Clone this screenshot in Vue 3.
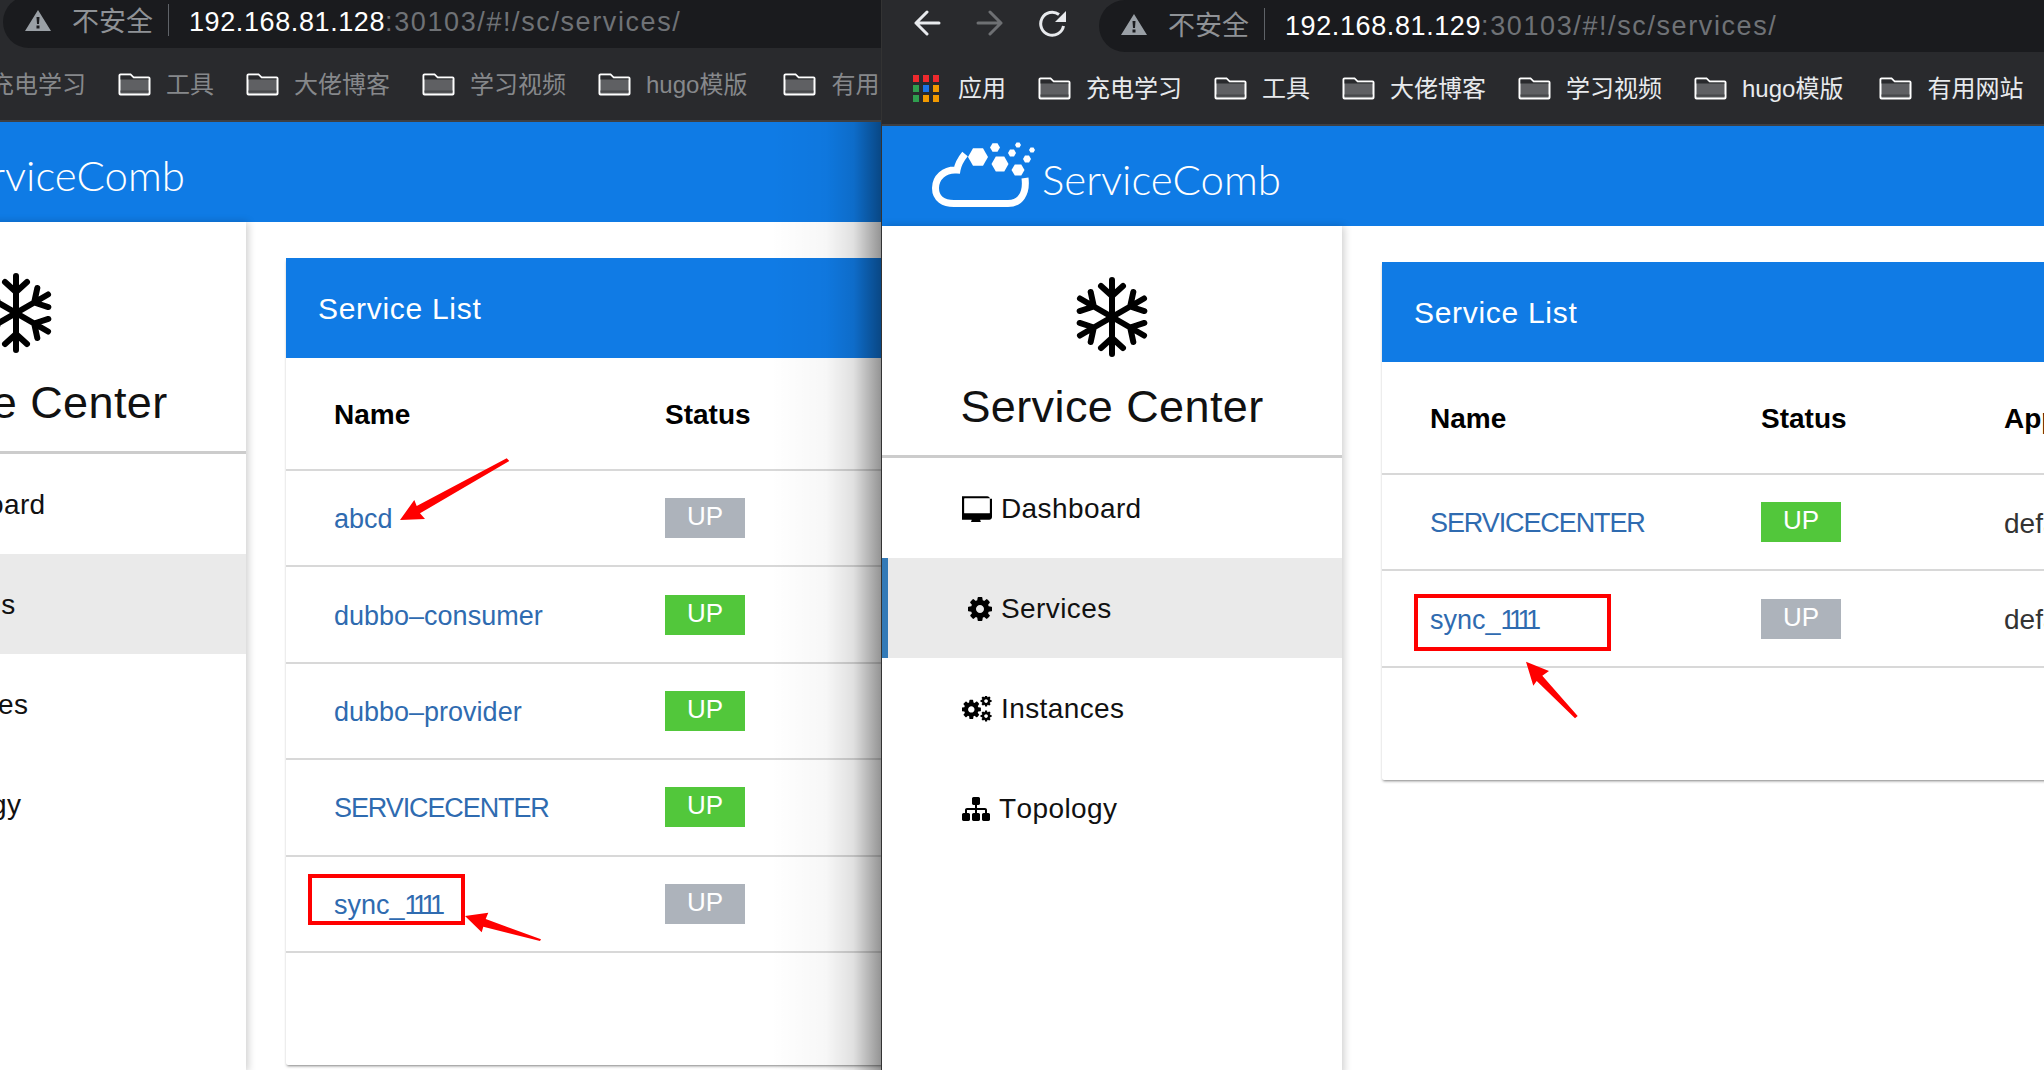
<script setup>
const cogPath = 'M1152 896q0-106-75-181t-181-75-181 75-75 181 75 181 181 75 181-75 75-181zm512-109v222q0 12-8 23t-20 13l-185 28q-19 54-39 91 35 50 107 138 10 12 10 25t-9 23q-27 37-99 108t-94 71q-12 0-26-9l-138-108q-44 23-91 38-16 136-29 186-7 28-36 28h-222q-14 0-24.5-8.5t-11.5-21.5l-28-184q-49-16-90-37l-141 107q-10 9-25 9-14 0-25-11-126-114-165-168-7-10-7-23 0-12 8-23 15-21 51-66.5t54-70.5q-27-50-41-99l-183-27q-13-2-21-12.5t-8-23.5v-222q0-12 8-23t19-13l186-28q14-46 39-92-40-57-107-138-10-12-10-24 0-10 9-23 26-36 98.5-107.5t94.5-71.5q13 0 26 10l138 107q44-23 91-38 16-136 29-186 7-28 36-28h222q14 0 24.5 8.5t11.5 21.5l28 184q49 16 90 37l142-107q9-9 24-9 13 0 25 10 129 119 165 170 7 8 7 22 0 12-8 23-15 21-51 66.5t-54 70.5q26 50 41 98l183 28q13 2 21 12.5t8 23.5z'
const desktopPath = 'M1664 992v-832q0-13-9.5-22.5t-22.5-9.5h-1472q-13 0-22.5 9.5t-9.5 22.5v832q0 13 9.5 22.5t22.5 9.5h1472q13 0 22.5-9.5t9.5-22.5zm128-832v1088q0 66-47 113t-113 47h-544q0 37 16 77.5t32 71 16 43.5q0 26-19 45t-45 19h-512q-26 0-45-19t-19-45q0-14 16-44t32-70 16-78h-544q-66 0-113-47t-47-113v-1088q0-66 47-113t113-47h1472q66 0 113 47t47 113z'
const sitemapPath = 'M1792 1248v320q0 40-28 68t-68 28h-320q-40 0-68-28t-28-68v-320q0-40 28-68t68-28h96v-192h-512v192h96q40 0 68 28t28 68v320q0 40-28 68t-68 28h-320q-40 0-68-28t-28-68v-320q0-40 28-68t68-28h96v-192h-512v192h96q40 0 68 28t28 68v320q0 40-28 68t-68 28h-320q-40 0-68-28t-28-68v-320q0-40 28-68t68-28h96v-192q0-52 38-90t90-38h512v-192h-96q-40 0-68-28t-28-68v-320q0-40 28-68t68-28h320q40 0 68 28t28 68v320q0 40-28 68t-68 28h-96v192h512q52 0 90 38t38 90v192h96q40 0 68 28t28 68z'

const bookmarks = ['充电学习', '工具', '大佬博客', '学习视频', 'hugo模版', '有用网站']
const appColors = ['#ee2a2e', '#ee2a2e', '#ee2a2e', '#2f9e4f', '#1a73e8', '#f29900', '#2f9e4f', '#f29900', '#f29900']
const menu = [
  { name: 'Dashboard', icon: 'desktop' },
  { name: 'Services', icon: 'cog', active: true },
  { name: 'Instances', icon: 'cogs' },
  { name: 'Topology', icon: 'sitemap' }
]

// logo 上的小六边形
const hexes = [[46, 12, 10], [68, 19, 8.5], [63, 2.5, 5], [80, 8, 4], [86, 25, 6.5], [86, 0, 3], [95, 14, 4], [100, 5, 3]].map(([x, y, r]) =>
  [0, 1, 2, 3, 4, 5].map((i) => {
    const a = (Math.PI / 3) * i
    return `${(x + r * Math.cos(a)).toFixed(1)},${(y + 3 + r * Math.sin(a)).toFixed(1)}`
  }).join(' ')
)

// 两个浏览器窗口，内容相同，左边的被遮住一部分
const panes = [
  {
    key: 'left',
    ip: '192.168.81.128',
    rows: [
      { name: 'abcd', online: false },
      { name: 'dubbo–consumer', online: true },
      { name: 'dubbo–provider', online: true },
      { name: 'SERVICECENTER', online: true, caps: true },
      { name: 'sync_', tail: '1111', online: false }
    ]
  },
  {
    key: 'right',
    ip: '192.168.81.129',
    rows: [
      { name: 'SERVICECENTER', online: true, caps: true },
      { name: 'sync_', tail: '1111', online: false }
    ]
  }
]
</script>

<template>
  <div class="page">
    <div v-for="pane in panes" :key="pane.key" class="pane" :class="'pane-' + pane.key">
      <div class="window">
        <header class="toolbar">
          <div class="top-row">
            <div class="nav">
              <svg width="28" height="26" viewBox="0 0 28 26" fill="none" stroke="#e8eaed" stroke-width="3" stroke-linecap="round" stroke-linejoin="round"><path d="M26 13H3M14 2 3 13 14 24" /></svg>
              <svg width="28" height="26" viewBox="0 0 28 26" fill="none" stroke="#6e7073" stroke-width="3" stroke-linecap="round" stroke-linejoin="round"><path d="M2 13h23M14 2l11 11-11 11" /></svg>
              <svg width="27" height="27" viewBox="0 0 27 27" fill="none" stroke="#e8eaed" stroke-width="3"><path d="M20 4.500A11.500 11.500 0 1 0 24.500 16" /><path d="M27 1v11H16z" fill="#e8eaed" stroke="none" /></svg>
            </div>
            <div class="address">
              <svg class="warn" width="26" height="21" viewBox="0 0 26 21"><path fill="#9aa0a6" fill-rule="evenodd" d="M13 0 26 21H0zM11.500 7l.5 7h2l.5-7zM11.500 15.500v3h3v-3z" /></svg>
              <span class="unsafe">不安全</span>
              <span class="sep"></span>
              <span class="host">{{ pane.ip }}</span><span class="path">:30103/#!/sc/services/</span>
            </div>
          </div>
          <div class="bookmarks">
            <div class="apps">
              <svg width="26" height="27" viewBox="0 0 26 27"><rect v-for="(c, i) in appColors" :key="i" :x="(i % 3) * 10" :y="Math.floor(i / 3) * 10" width="6" height="7" :fill="c" /></svg>
              <span class="mark">应用</span>
            </div>
            <div v-for="b in bookmarks" :key="b" class="bookmark">
              <svg class="folder" width="33" height="23" viewBox="0 0 33 23">
                <path d="M1.500 2.500a1 1 0 0 1 1-1h10l3 3h15a1 1 0 0 1 1 1v15a1 1 0 0 1-1 1h-28a1 1 0 0 1-1-1z" fill="#5f6063" stroke="#fff" stroke-width="2" />
                <path d="M2.500 17.500h28v2h-28z" fill="#47484b" />
                <path d="M2.500 2.500h10l3 3h15v1h-28z" fill="#292a2d" />
              </svg>
              <span class="mark">{{ b }}</span>
            </div>
          </div>
        </header>

        <div class="brandbar">
          <svg class="logo" width="104" height="68" viewBox="0 0 104 68">
            <path d="M33 12C29 17 26 22 25 28 12 27 3.500 36 3.500 46 3.500 57 12 61.500 22 61.500H76C88 61.500 95 52 93 36" fill="none" stroke="#fff" stroke-width="7" />
            <polygon v-for="(pts, i) in hexes" :key="i" :points="pts" fill="#fff" />
          </svg>
          <span class="brand">ServiceComb</span>
        </div>

        <div class="body">
          <aside class="sidebar">
            <div class="sidebar-head">
              <svg width="72" height="82" viewBox="-36 -41 72 82" fill="none" stroke="#000" stroke-width="6" stroke-linecap="round">
                <g v-for="deg in [0, 60, 120]" :key="deg" :transform="`rotate(${deg})`">
                  <path d="M0-37V37M0-21-11-31M0-21 11-31M0 21-11 31M0 21 11 31" />
                </g>
              </svg>
              <div class="title">Service Center</div>
            </div>
            <nav>
              <div v-for="item in menu" :key="item.name" class="menu-item" :class="{ active: item.active }">
                <svg v-if="item.icon === 'desktop'" width="30" height="26" viewBox="0 0 1792 1536"><path :d="desktopPath" /></svg>
                <svg v-else-if="item.icon === 'cog'" class="cog" width="24" height="24" viewBox="128 128 1536 1536"><path :d="cogPath" fill-rule="evenodd" /></svg>
                <svg v-else-if="item.icon === 'cogs'" width="30" height="26" viewBox="0 0 30 26">
                  <path :d="cogPath" fill-rule="evenodd" transform="translate(-1.900 2.200) scale(.0125)" />
                  <path :d="cogPath" fill-rule="evenodd" transform="translate(17.600 -1.400) scale(.0072)" />
                  <path :d="cogPath" fill-rule="evenodd" transform="translate(17.600 13.600) scale(.0072)" />
                </svg>
                <svg v-else width="28" height="24" viewBox="0 128 1792 1536"><path :d="sitemapPath" /></svg>
                <span>{{ item.name }}</span>
              </div>
            </nav>
          </aside>

          <main class="content">
            <section class="card">
              <div class="card-title">Service List</div>
              <div class="row head">
                <div class="col-name">Name</div>
                <div class="col-status">Status</div>
                <div class="col-app">AppId</div>
              </div>
              <div v-for="row in pane.rows" :key="row.name" class="row">
                <div class="col-name link" :class="{ caps: row.caps }">{{ row.name }}<span v-if="row.tail" class="tail">{{ row.tail }}</span></div>
                <div class="col-status"><span class="badge" :class="{ online: row.online }">UP</span></div>
                <div class="col-app value">default</div>
              </div>
            </section>
          </main>
        </div>
      </div>
      <div v-if="pane.key === 'left'" class="fade"></div>
    </div>

    <!-- 截图上的红色标注 -->
    <svg class="marks" width="2044" height="1070" viewBox="0 0 2044 1070">
      <g fill="none" stroke="#f00" stroke-width="4">
        <rect x="310" y="876" width="153" height="47" />
        <rect x="1416" y="596" width="193" height="53" />
      </g>
      <g fill="#f00">
        <polygon points="400,520 414.300,500 416.700,506 506.700,458.300 509.300,461 420,513.300 425,519" />
        <polygon points="465,916 488.300,912.700 485.700,919 541,939.300 540,941 483.300,926.700 481.700,932.300" />
        <polygon points="1526,661.700 1549,671 1542.300,675.700 1577.700,716 1575,718.300 1536.700,681 1533.300,685.700" />
      </g>
    </svg>
  </div>
</template>

<style scoped>
.page {
  position: relative;
  display: flex;
  width: 2044px;
  height: 1070px;
  overflow: hidden;
  background: #333;
  font-family: "Liberation Sans", "Noto Sans CJK SC", sans-serif;
  color: #111;
}

.pane {
  position: relative;
  overflow: hidden;
  background: #fff;
}
.pane-left { width: 881px; margin-right: 1px; }
.pane-right { width: 1162px; }
.pane-left .window { margin: -4px 0 0 -214px; }

.window { width: 1162px; }

.toolbar {
  height: 124px;
  background: #292a2d;
  border-bottom: 2px solid #3e3f42;
}
.top-row { display: flex; height: 52px; }
.nav {
  display: flex;
  align-items: center;
  gap: 35px;
  width: 217px;
  flex: none;
  padding: 0 0 6px 31px;
  box-sizing: border-box;
}
.pane-left .nav svg { visibility: hidden; }

.address {
  flex: 1;
  display: flex;
  align-items: center;
  padding-left: 22px;
  background: #1a1b1e;
  border-radius: 26px 0 0 26px;
  font-size: 27px;
  white-space: nowrap;
}
.warn { flex: none; margin-bottom: 4px; }
.unsafe { margin-left: 21px; padding-bottom: 5px; color: #8f9296; }
.sep { width: 1px; height: 32px; margin: 0 20px 4px 15px; background: #5f6368; }
.host { color: #fff; letter-spacing: .6px; }
.path { color: #6f7276; letter-spacing: 1.600px; }

.bookmarks {
  display: flex;
  align-items: center;
  gap: 32px;
  height: 72px;
  padding-left: 31px;
  white-space: nowrap;
}
.apps, .bookmark { display: flex; align-items: center; }
.apps { gap: 19px; }
.bookmark { gap: 15px; }
.bookmark:last-child { margin-left: 4px; }
.mark { padding-bottom: 4px; font-size: 24px; color: #e8eaed; }
.pane-left .mark { color: #86888b; }

.brandbar {
  display: flex;
  align-items: center;
  height: 100px;
  padding-left: 50px;
  background: #0f7be5;
}
.logo { flex: none; }
.brand {
  margin-left: 6px;
  padding-top: 6px;
  font-family: "Lato", "Liberation Sans", sans-serif;
  font-weight: 300;
  font-size: 42px;
  color: #fff;
}

.body { display: flex; min-height: 850px; }

.sidebar {
  width: 460px;
  flex: none;
  background: #fff;
  box-shadow: 2px 0 8px rgba(0, 0, 0, .2);
}
.sidebar-head {
  display: flex;
  flex-direction: column;
  align-items: center;
  height: 232px;
  padding-top: 50px;
  box-sizing: border-box;
  border-bottom: 3px solid #ccc;
}
.title {
  margin-top: 23px;
  font-size: 45px;
  line-height: 52px;
  letter-spacing: .4px;
  color: #111;
}
.menu-item {
  display: flex;
  align-items: center;
  gap: 9px;
  height: 100px;
  padding: 2px 0 0 74px;
  box-sizing: border-box;
  border-left: 6px solid transparent;
  font-size: 28px;
  letter-spacing: .4px;
  font-kerning: none;
}
.menu-item svg { flex: none; }
.menu-item.active {
  background: #eaeaea;
  border-left-color: #337ab7;
}
.cog { margin-left: 6px; }

.content {
  flex: 1;
  padding: 36px 40px 0;
}
.card {
  width: 1400px;
  padding-bottom: 112px;
  background: #fff;
  border-radius: 2px;
  box-shadow: 0 2px 3px -1px rgba(0, 0, 0, .5);
}
.card-title {
  height: 100px;
  padding: 1px 0 0 32px;
  box-sizing: border-box;
  line-height: 100px;
  font-size: 30px;
  letter-spacing: .7px;
  color: #fff;
  background: #107be5;
}

.row {
  display: grid;
  grid-template-columns: 379px 243px 1fr;
  align-items: center;
  height: 96.400px;
  border-bottom: 2px solid #d8d8d8;
  box-sizing: border-box;
  font-size: 27px;
  color: #333;
}
.row.head {
  height: 113px;
  padding-top: 2px;
  font-size: 28px;
  font-weight: 700;
  color: #000;
}
.col-name { padding-left: 48px; }
.link { color: #2f6bb0; padding-top: 3px; }
.caps { letter-spacing: -1.100px; }
.tail { letter-spacing: -4.500px; }
.value { padding-top: 3px; font-size: 28px; }

.badge {
  display: block;
  width: 80px;
  height: 40px;
  line-height: 36px;
  text-align: center;
  font-size: 26px;
  color: #fff;
  background: #adb3bb;
}
.badge.online { background: #52c73b; }

/* 左窗口右侧的阴影 */
.fade {
  position: absolute;
  top: 122px;
  right: 0;
  bottom: 0;
  width: 110px;
  pointer-events: none;
  background: linear-gradient(to right, rgba(0, 0, 0, 0), rgba(0, 0, 0, .03) 50%, rgba(0, 0, 0, .12) 75%, rgba(0, 0, 0, .42));
}

.marks {
  position: absolute;
  top: 0;
  left: 0;
  pointer-events: none;
}
</style>
